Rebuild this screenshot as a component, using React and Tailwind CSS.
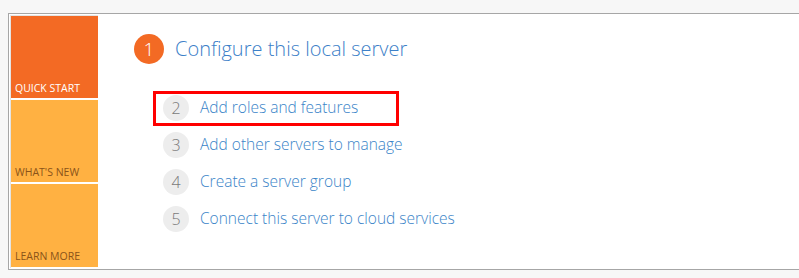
import React from "react";

const rows = [
  { n: "2", t: "Add roles and features", mark: true },
  { n: "3", t: "Add other servers to manage" },
  { n: "4", t: "Create a server group" },
  { n: "5", t: "Connect this server to cloud services" },
];

export default function App() {
  return (
    <div
      className="w-[799px] h-[278px] bg-[#f7f7f7] overflow-hidden pt-[13px] pl-[8px]"
      style={{ fontFamily: '"Open Sans", "Noto Sans", sans-serif' }}
    >
      <div className="w-[820px] h-[257px] border border-[#a6a6a6] bg-white p-px flex">
        <div className="w-[88px] flex flex-col gap-[2px] border-t border-l border-[#e4e4e4] pb-[1px]">
          <div className="flex-1 bg-[#f36a24] flex items-end px-[4px] pb-[5px]">
            <span className="text-[10.5px] leading-none text-white">QUICK START</span>
          </div>
          <div className="flex-1 bg-[#ffb142] flex items-end px-[4px] pb-[5px]">
            <span className="text-[10.5px] leading-none text-[#8a5319]">WHAT'S NEW</span>
          </div>
          <div className="flex-1 bg-[#ffb142] flex items-end px-[4px] pb-[6px]">
            <span className="text-[10.5px] leading-none text-[#8a5319]">LEARN MORE</span>
          </div>
        </div>
        <div className="flex-1 pl-[36px] pt-[19px]">
          <div className="flex items-center h-[30px]">
            <div className="w-[30px] h-[30px] rounded-full bg-[#f36a24] flex items-center justify-center text-white text-[19px] font-light leading-none">
              1
            </div>
            <span className="ml-[11px] text-[20px] font-light text-[#3c80c8] leading-none">
              Configure this local server
            </span>
          </div>
          <div className="mt-[25px] ml-[29px] flex flex-col">
            {rows.map((r) => (
              <div key={r.n} className="relative flex items-center h-[37px]">
                <div className="w-[26px] h-[26px] rounded-full bg-[#ededed] flex items-center justify-center text-[#7a7a7a] text-[16px] font-light leading-none">
                  {r.n}
                </div>
                <span className="ml-[11px] text-[15.5px] font-light text-[#3a84c8] leading-none">{r.t}</span>
                {r.mark && (
                  <div className="absolute left-[-10px] top-[2px] w-[246px] h-[35px] border-[3px] border-[#ff0000]" />
                )}
              </div>
            ))}
          </div>
        </div>
      </div>
    </div>
  );
}
